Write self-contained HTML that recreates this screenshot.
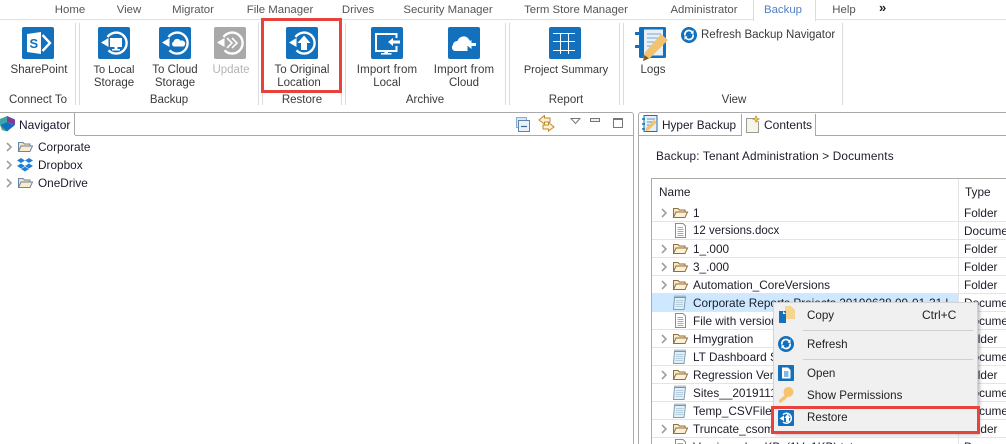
<!DOCTYPE html>
<html><head><meta charset="utf-8"><style>
html,body{margin:0;padding:0;background:#fff}
#p{position:relative;width:1006px;height:444px;overflow:hidden;background:#fff;font-family:"Liberation Sans",sans-serif;font-size:11.8px;color:#1c1c2a}
#p div,#p svg{position:absolute}
.t{white-space:nowrap;line-height:14px;height:14px}
.c{transform:translateX(-50%);color:#3a3a3a;text-align:center;font-size:11.5px}
.tab{top:3px;color:#555;transform:translateX(-50%);white-space:nowrap;line-height:14px;font-size:11.4px}
.v{width:1px;top:23px;height:82px;background:#dcdcdc}
.r{left:652px;width:306px;height:1px;background:#e4e4e4}
.r2{left:959px;width:47px;height:1px;background:#e4e4e4}
.sep{left:803px;width:169px;height:1px;background:#d0d0d0}
.m{font-size:11.6px;color:#222}
</style></head><body><div id="p">
<svg width="0" height="0"><defs>
<g id="arc"><path d="M9.500 10A10.500 10.500 0 1 1 10.500 23.300" fill="none" stroke="#fff" stroke-width="2.400"/><path d="M3 15.500L10.500 11V20Z" fill="#fff"/></g>
<g id="fold"><path d="M1.500 12.500V3.500H6L7.500 5H13V7" fill="#f9e8c2" stroke="#8f7040"/><path d="M1.500 12.500L4 7H15.500L13 12.500Z" fill="#fcf0d6" stroke="#8f7040"/></g>
<g id="doc"><path d="M2.500 .5H10L12.500 3V14.500H2.500Z" fill="#fff" stroke="#8c8c8c"/><path d="M4.500 4.500H10M4.500 6.500H10.500M4.500 8.500H10.500M4.500 10.500H10.500M4.500 12.500H10.500" stroke="#a8a8a8"/></g>
<g id="note"><path d="M2.500 2.500H13.500L12 14.500H1.500Z" fill="#e4eff7" stroke="#7c9fb8"/><path d="M3 .5V3M5 .5V3M7 .5V3M9 .5V3M11 .5V3M13 .5V3" stroke="#6f8ea5"/><path d="M4 5.500H11.500M3.800 7.500H11.300M3.600 9.500H11M3.400 11.500H10.800" stroke="#b4cede"/></g>
<path id="chev" d="M1 1L5 5L1 9" fill="none" stroke="#a0a0a0" stroke-width="1.600"/>
</defs></svg>

<!-- Tabs -->
<div class="tab" style="left:70px">Home</div>
<div class="tab" style="left:129px">View</div>
<div class="tab" style="left:193px">Migrator</div>
<div class="tab" style="left:280px">File Manager</div>
<div class="tab" style="left:358px">Drives</div>
<div class="tab" style="left:448px">Security Manager</div>
<div class="tab" style="left:576px">Term Store Manager</div>
<div class="tab" style="left:704px">Administrator</div>
<div style="left:0;top:19px;width:1006px;height:1px;background:#e0e0e0"></div>
<div style="left:753px;top:-3px;width:61px;height:23px;background:#fff;border:1px solid #dcdcdc;border-bottom:none;border-radius:3px 3px 0 0"></div>
<div class="tab" style="left:783px;color:#4f7fc4">Backup</div>
<div class="tab" style="left:844px">Help</div>
<div class="t" style="left:879px;top:1px;font-size:13px;color:#222;font-weight:bold">»</div>

<!-- Separators -->
<div class="v" style="left:75px"></div><div class="v" style="left:79px"></div>
<div class="v" style="left:258px"></div><div class="v" style="left:262px"></div>
<div class="v" style="left:341px"></div><div class="v" style="left:345px"></div>
<div class="v" style="left:505px"></div><div class="v" style="left:509px"></div>
<div class="v" style="left:619px"></div><div class="v" style="left:623px"></div>
<div class="v" style="left:842px"></div>

<!-- SharePoint -->
<svg style="left:22px;top:27px" width="32" height="32" viewBox="0 0 32 32"><rect width="32" height="32" rx="2" fill="#1270bd"/><path d="M5 7L19 5V27L5 25Z" fill="#fff"/><path d="M20.500 8L28 16L20.500 24" fill="none" stroke="#fff" stroke-width="2.400"/><text x="7.500" y="21" font-family="Liberation Sans" font-size="13" font-weight="bold" fill="#1270bd">S</text></svg>
<!-- To Local -->
<svg style="left:98px;top:27px" width="32" height="32" viewBox="0 0 32 32"><rect width="32" height="32" rx="2" fill="#1270bd"/><use href="#arc"/><rect x="12" y="11" width="12" height="9" fill="#fff"/><rect x="16.500" y="20" width="3" height="2" fill="#fff"/><rect x="14" y="22" width="8" height="1.500" fill="#fff"/></svg>
<!-- To Cloud -->
<svg style="left:159px;top:27px" width="32" height="32" viewBox="0 0 32 32"><rect width="32" height="32" rx="2" fill="#1270bd"/><use href="#arc"/><path d="M15 19.500A2.500 2.500 0 0 1 14.500 14.800A3.800 3.800 0 0 1 21.500 13.800A2.900 2.900 0 0 1 24.500 19.500Z" fill="#fff"/></svg>
<!-- Update -->
<svg style="left:214px;top:27px" width="32" height="32" viewBox="0 0 32 32"><rect width="32" height="32" rx="2" fill="#a9a9a9"/><use href="#arc"/><path d="M13 11L18 16L13 21M18 11L23 16L18 21" fill="none" stroke="#fff" stroke-width="1.600"/></svg>
<!-- To Original -->
<svg style="left:286px;top:27px" width="32" height="32" viewBox="0 0 32 32"><rect width="32" height="32" rx="2" fill="#1270bd"/><use href="#arc"/><path d="M18 8.500L24.500 16H21V23H15V16H11.500Z" fill="#fff"/></svg>
<!-- Import Local -->
<svg style="left:371px;top:27px" width="32" height="32" viewBox="0 0 32 32"><rect width="32" height="32" rx="2" fill="#1270bd"/><path d="M25.500 11V7H5V24H25.500V19" fill="none" stroke="#fff" stroke-width="2"/><rect x="13.500" y="24" width="3.500" height="2" fill="#fff"/><rect x="10" y="26" width="10.500" height="1.600" fill="#fff"/><path d="M17 15L22 11V13.500H29V16.500H22V19Z" fill="#fff"/></svg>
<!-- Import Cloud -->
<svg style="left:448px;top:27px" width="32" height="32" viewBox="0 0 32 32"><rect width="32" height="32" rx="2" fill="#1270bd"/><path d="M7 24A3.500 3.500 0 0 1 5 18C5 15 8 14 9.500 14C11 9 18 7.500 21 12.500C22 13.500 23 15 22 16L21 24Z" fill="#fff"/><path d="M19.500 24H25V17H19.500Z" fill="#1270bd"/><path d="M18 17.500L23.500 13V16H28V19H23.500V22Z" fill="#fff"/></svg>
<!-- Project Summary -->
<svg style="left:549px;top:27px" width="32" height="32" viewBox="0 0 32 32"><rect width="32" height="32" rx="2" fill="#1270bd"/><path d="M4 6.500H26M4 14.500H26M4 23.500H26M11.500 6V27M19.500 6V27" stroke="#fff" stroke-width="1" fill="none"/></svg>
<!-- Logs -->
<svg style="left:635px;top:26px" width="34" height="36" viewBox="0 0 34 36"><rect x="4" y="1" width="27" height="31" rx="1.500" fill="#1270bd"/><rect x="9" y="3.500" width="19" height="26" fill="#e6f0f8"/><path d="M12 8H26M12 12H26M12 16H26M12 20H24" stroke="#7aa6cc"/><path d="M1 7.500H7M1 20.500H7" stroke="#1270bd" stroke-width="3" stroke-linecap="round"/><path d="M9.500 27L26 8L33 14L15 32L8 35Z" fill="#f3c26f"/><path d="M8 35L9.500 29L14 32.500Z" fill="#7a5a28"/></svg>
<!-- Refresh -->
<svg style="left:681px;top:27px" width="16" height="16" viewBox="0 0 16 16"><circle cx="8" cy="8" r="8" fill="#1270bd"/><path d="M4 8.500A4 4 0 0 1 11 5M12 7.500A4 4 0 0 1 5 11" fill="none" stroke="#fff" stroke-width="1.800"/><path d="M9.500 6.500L12.500 3V7Z M6.500 9.500L3.500 13V9Z" fill="#fff"/></svg>

<div class="t c" style="left:39px;top:63px">SharePoint</div>
<div class="t c" style="left:114px;top:63px;font-size:11px">To Local</div><div class="t c" style="left:114px;top:76px">Storage</div>
<div class="t c" style="left:175px;top:63px">To Cloud</div><div class="t c" style="left:175px;top:76px">Storage</div>
<div class="t c" style="left:231px;top:63px;color:#b4b4b4">Update</div>
<div class="t c" style="left:302px;top:63px">To Original</div><div class="t c" style="left:299px;top:76px">Location</div>
<div class="t c" style="left:387px;top:63px;letter-spacing:.15px">Import from</div><div class="t c" style="left:387px;top:76px">Local</div>
<div class="t c" style="left:464px;top:63px;letter-spacing:.15px">Import from</div><div class="t c" style="left:464px;top:76px">Cloud</div>
<div class="t c" style="left:566px;top:63px;font-size:11px">Project Summary</div>
<div class="t c" style="left:653px;top:63px">Logs</div>
<div class="t" style="left:701px;top:28px;color:#3a3a3a;font-size:11.5px">Refresh Backup Navigator</div>
<div class="t c" style="left:38px;top:93px">Connect To</div>
<div class="t c" style="left:169px;top:93px">Backup</div>
<div class="t c" style="left:302px;top:93px">Restore</div>
<div class="t c" style="left:425px;top:93px">Archive</div>
<div class="t c" style="left:566px;top:93px">Report</div>
<div class="t c" style="left:734px;top:93px">View</div>

<!-- Red box top -->
<div style="left:261px;top:18px;width:75px;height:69px;border:3px solid #e8423c;z-index:3"></div>

<!-- Panels -->
<div style="left:0;top:112px;width:631px;height:1px;background:#aaa"></div>
<div style="left:631px;top:112px;height:332px;border-top:1px solid #aaa;border-right:1px solid #aaa;border-radius:0 3px 0 0;box-sizing:border-box;width:3px"></div>
<div style="left:638px;top:112px;width:368px;height:332px;border-top:1px solid #aaa;border-left:1px solid #aaa;border-radius:3px 0 0 0;box-sizing:border-box"></div>
<div style="left:74px;top:113px;width:1px;height:22px;background:#aaa"></div>
<div style="left:75px;top:135px;width:558px;height:1px;background:#aaa"></div>
<div style="left:639px;top:135px;width:367px;height:1px;background:#aaa"></div>
<div style="left:741px;top:114px;width:73px;height:22px;background:#fff;border-right:1px solid #aaa;border-left:1px solid #aaa"></div>

<!-- Navigator -->
<svg style="left:0;top:116px" width="16" height="16" viewBox="0 0 16 16"><path d="M7 0L15 3.500V9L7 6Z" fill="#7b3f98"/><path d="M7 0L0 3V9L7 6Z" fill="#3ba7a0"/><path d="M0 9L7 6L15 9L7 15.500Z" fill="#1270bd"/><path d="M0 9L7 15.500L2 14Z" fill="#3bab5e"/></svg>
<div class="t" style="left:19px;top:118px;color:#15152a;font-size:12px">Navigator</div>
<svg style="left:6px;top:142px" width="7" height="11" viewBox="0 0 7 11"><use href="#chev"/></svg>
<svg style="left:6px;top:160px" width="7" height="11" viewBox="0 0 7 11"><use href="#chev"/></svg>
<svg style="left:6px;top:178px" width="7" height="11" viewBox="0 0 7 11"><use href="#chev"/></svg>
<svg style="left:17px;top:139px" width="17" height="15" viewBox="0 0 17 15"><path d="M1.500 12.500V3.500H6L7.500 5H13V7" fill="#f8e3b4" stroke="#6a86a6"/><path d="M1.500 12.500L4 7H15.500L13 12.500Z" fill="#fbeccb" stroke="#6a86a6"/></svg>
<svg style="left:17px;top:157px" width="16" height="15" viewBox="0 0 16 15"><path d="M4 1L8 3.500L4 6L0 3.500ZM12 1L16 3.500L12 6L8 3.500ZM4 6.500L8 9L4 11.500L0 9ZM12 6.500L16 9L12 11.500L8 9ZM4 12L8 9.800L12 12L8 14.500Z" fill="#1f7fd8"/></svg>
<svg style="left:17px;top:175px" width="17" height="15" viewBox="0 0 17 15"><path d="M1.500 12.500V3.500H6L7.500 5H13V7" fill="#f8e3b4" stroke="#6a86a6"/><path d="M1.500 12.500L4 7H15.500L13 12.500Z" fill="#fbeccb" stroke="#6a86a6"/></svg>
<div class="t" style="left:38px;top:140px">Corporate</div>
<div class="t" style="left:38px;top:158px">Dropbox</div>
<div class="t" style="left:38px;top:176px">OneDrive</div>

<!-- Toolbar -->
<svg style="left:516px;top:117px" width="14" height="15" viewBox="0 0 14 15"><rect x=".5" y=".5" width="10" height="10" fill="#dbe7f2" stroke="#8eaecb"/><rect x="2.500" y="3.500" width="11" height="11" fill="#eaf1f8" stroke="#5a87ad"/><path d="M5 9.500H11" stroke="#3a6a94" stroke-width="1.200"/></svg>
<svg style="left:538px;top:115px" width="17" height="17" viewBox="0 0 17 17"><path d="M6.500 .5L1 5L6.500 9V7H12V3H6.500Z M10.500 7.500L16 12L10.500 16V14H5V10H10.500Z" fill="#fbf3d8" stroke="#c08a2c"/></svg>
<svg style="left:570px;top:118px" width="11" height="7" viewBox="0 0 11 7"><path d="M1 .5H10L5.500 5.500Z" fill="#fff" stroke="#777"/></svg>
<div style="left:590px;top:118px;width:8px;height:2px;border:1px solid #777;background:#eee"></div>
<div style="left:613px;top:118px;width:8px;border:1px solid #777;border-top-width:2px;height:7px"></div>

<!-- Right tabs -->
<svg style="left:642px;top:115px" width="16" height="18" viewBox="0 0 16 18"><rect x="2" y=".5" width="13" height="16" fill="#e6f0f8" stroke="#1270bd"/><path d="M5 4H13M5 7H13M5 10H11" stroke="#5f95c4"/><path d="M0 4H3M0 9H3M0 14H3" stroke="#1270bd" stroke-width="1.500"/><path d="M4 13L12 5L15 7L7 15L3.500 16.500Z" fill="#f3c26f"/></svg>
<div class="t" style="left:662px;top:118px">Hyper Backup</div>
<svg style="left:746px;top:115px" width="15" height="18" viewBox="0 0 15 18"><path d="M.5 3.500H8L12.500 7V17.500H.5Z" fill="#f8f5e8" stroke="#9a9a9a"/><path d="M10 .5L11 3L13.500 4L11 5L10 7.500L9 5L6.500 4L9 3Z" fill="#f3c64c" stroke="#a67c1a" stroke-width=".5"/></svg>
<div class="t" style="left:764px;top:118px;font-size:12px">Contents</div>

<div class="t" style="left:656px;top:149px;letter-spacing:.15px">Backup: Tenant Administration &gt; Documents</div>

<!-- Table -->
<div style="left:651px;top:178px;width:355px;height:1px;background:#aaa"></div>
<div style="left:651px;top:178px;width:1px;height:266px;background:#aaa"></div>
<div style="left:958px;top:179px;width:1px;height:265px;background:#e4e4e4"></div>
<div style="left:652px;top:293px;width:306px;height:18px;background:#cde8ff"></div>
<div class="r" style="top:221px"></div><div class="r2" style="top:221px"></div>
<div class="r" style="top:239px"></div><div class="r2" style="top:239px"></div>
<div class="r" style="top:257px"></div><div class="r2" style="top:257px"></div>
<div class="r" style="top:275px"></div><div class="r2" style="top:275px"></div>
<div class="r" style="top:293px"></div><div class="r2" style="top:293px"></div>
<div class="r" style="top:311px"></div><div class="r2" style="top:311px"></div>
<div class="r" style="top:329px"></div><div class="r2" style="top:329px"></div>
<div class="r" style="top:347px"></div><div class="r2" style="top:347px"></div>
<div class="r" style="top:365px"></div><div class="r2" style="top:365px"></div>
<div class="r" style="top:383px"></div><div class="r2" style="top:383px"></div>
<div class="r" style="top:401px"></div><div class="r2" style="top:401px"></div>
<div class="r" style="top:419px"></div><div class="r2" style="top:419px"></div>
<div class="r" style="top:437px"></div><div class="r2" style="top:437px"></div>

<div class="t" style="left:659px;top:185px">Name</div>
<div class="t" style="left:965px;top:185px">Type</div>

<svg style="left:661px;top:208px" width="7" height="11" viewBox="0 0 7 11"><use href="#chev"/></svg><svg style="left:672px;top:205px" width="17" height="15" viewBox="0 0 17 15"><use href="#fold"/></svg><div class="t" style="left:693px;top:206px">1</div><div class="t" style="left:964px;top:206px">Folder</div>
<svg style="left:673px;top:223px" width="14" height="15" viewBox="0 0 14 15"><use href="#doc"/></svg><div class="t" style="left:693px;top:224px;font-size:11.500px">12 versions.docx</div><div class="t" style="left:964px;top:224px">Document</div>
<svg style="left:661px;top:244px" width="7" height="11" viewBox="0 0 7 11"><use href="#chev"/></svg><svg style="left:672px;top:241px" width="17" height="15" viewBox="0 0 17 15"><use href="#fold"/></svg><div class="t" style="left:693px;top:242px">1_.000</div><div class="t" style="left:964px;top:242px">Folder</div>
<svg style="left:661px;top:262px" width="7" height="11" viewBox="0 0 7 11"><use href="#chev"/></svg><svg style="left:672px;top:259px" width="17" height="15" viewBox="0 0 17 15"><use href="#fold"/></svg><div class="t" style="left:693px;top:260px">3_.000</div><div class="t" style="left:964px;top:260px">Folder</div>
<svg style="left:661px;top:280px" width="7" height="11" viewBox="0 0 7 11"><use href="#chev"/></svg><svg style="left:672px;top:277px" width="17" height="15" viewBox="0 0 17 15"><use href="#fold"/></svg><div class="t" style="left:693px;top:278px">Automation_CoreVersions</div><div class="t" style="left:964px;top:278px">Folder</div>
<svg style="left:672px;top:295px" width="15" height="15" viewBox="0 0 15 15"><use href="#note"/></svg><div class="t" style="left:693px;top:296px">Corporate Reports Projects 20190628 09-01-31.l</div><div class="t" style="left:964px;top:296px">Document</div>
<svg style="left:673px;top:313px" width="14" height="15" viewBox="0 0 14 15"><use href="#doc"/></svg><div class="t" style="left:693px;top:314px">File with version</div><div class="t" style="left:964px;top:314px">Document</div>
<svg style="left:661px;top:334px" width="7" height="11" viewBox="0 0 7 11"><use href="#chev"/></svg><svg style="left:672px;top:331px" width="17" height="15" viewBox="0 0 17 15"><use href="#fold"/></svg><div class="t" style="left:693px;top:332px">Hmygration</div><div class="t" style="left:964px;top:332px">Folder</div>
<svg style="left:672px;top:349px" width="15" height="15" viewBox="0 0 15 15"><use href="#note"/></svg><div class="t" style="left:693px;top:350px">LT Dashboard Sites</div><div class="t" style="left:964px;top:350px">Document</div>
<svg style="left:661px;top:370px" width="7" height="11" viewBox="0 0 7 11"><use href="#chev"/></svg><svg style="left:672px;top:367px" width="17" height="15" viewBox="0 0 17 15"><use href="#fold"/></svg><div class="t" style="left:693px;top:368px">Regression Versions</div><div class="t" style="left:964px;top:368px">Folder</div>
<svg style="left:672px;top:385px" width="15" height="15" viewBox="0 0 15 15"><use href="#note"/></svg><div class="t" style="left:693px;top:386px">Sites__20191115</div><div class="t" style="left:964px;top:386px">Document</div>
<svg style="left:672px;top:403px" width="15" height="15" viewBox="0 0 15 15"><use href="#note"/></svg><div class="t" style="left:693px;top:404px">Temp_CSVFile_report</div><div class="t" style="left:964px;top:404px">Document</div>
<svg style="left:661px;top:424px" width="7" height="11" viewBox="0 0 7 11"><use href="#chev"/></svg><svg style="left:672px;top:421px" width="17" height="15" viewBox="0 0 17 15"><use href="#fold"/></svg><div class="t" style="left:693px;top:422px">Truncate_csom</div><div class="t" style="left:964px;top:422px">Folder</div>
<svg style="left:673px;top:439px" width="14" height="15" viewBox="0 0 14 15"><use href="#doc"/></svg><div class="t" style="left:693px;top:440px">Version_sha_KBs(1V_1KB).txt</div><div class="t" style="left:964px;top:440px">Document</div>

<!-- Context menu -->
<div style="left:773px;top:302px;width:205px;height:131px;background:#f0f0f0;border:1px solid #d4d4d4;box-sizing:border-box;box-shadow:2px 2px 3px rgba(0,0,0,.25);z-index:4">
<div class="sep" style="left:29px;top:27px;width:170px"></div>
<div class="sep" style="left:29px;top:56px;width:170px"></div>
<div class="t m" style="left:33px;top:6px">Copy</div>
<div class="t m" style="left:148px;top:5px;font-size:12px">Ctrl+C</div>
<div class="t m" style="left:33px;top:35px">Refresh</div>
<div class="t m" style="left:33px;top:64px">Open</div>
<div class="t m" style="left:33px;top:86px">Show Permissions</div>
<div class="t m" style="left:33px;top:108px">Restore</div>
</div>
<svg style="left:778px;top:306px;z-index:5" width="18" height="18" viewBox="0 0 18 18"><path d="M7 0H13L17 4V13H7Z" fill="#f5d590"/><path d="M1 5H8V17H1Z" fill="#1270bd"/><path d="M5 5L8 8H5Z" fill="#fff"/></svg>
<svg style="left:778px;top:336px;z-index:5" width="16" height="16" viewBox="0 0 16 16"><circle cx="8" cy="8" r="8" fill="#1270bd"/><path d="M4 8.500A4 4 0 0 1 11 5M12 7.500A4 4 0 0 1 5 11" fill="none" stroke="#fff" stroke-width="1.800"/><path d="M9.500 6.500L12.500 3V7Z M6.500 9.500L3.500 13V9Z" fill="#fff"/></svg>
<svg style="left:778px;top:365px;z-index:5" width="16" height="16" viewBox="0 0 16 16"><rect width="16" height="16" rx="1" fill="#1270bd"/><path d="M4 2.500H10L12.500 5V13.500H4Z" fill="#fff"/><path d="M6 7H10.500M6 9H10.500M6 11H10.500" stroke="#1270bd"/></svg>
<svg style="left:778px;top:387px;z-index:5" width="16" height="16" viewBox="0 0 16 16"><circle cx="10.500" cy="5" r="5" fill="#f5c46a"/><path d="M8 7L1 13V15.500H4L5 13.500H6.500L10 9Z" fill="#f5c46a"/></svg>
<svg style="left:778px;top:410px;z-index:5" width="16" height="16" viewBox="0 0 16 16"><rect width="16" height="16" rx="1" fill="#1270bd"/><path d="M5 4.500A5 5 0 1 1 5 12" fill="none" stroke="#fff" stroke-width="1.500"/><path d="M1.500 8.500L6 5.500V11Z" fill="#fff"/><path d="M9.500 4L12.500 8H11V12H8V8H6.500Z" fill="#fff"/></svg>
<div style="left:771px;top:406px;width:203px;height:22px;border:3px solid #e8423c;z-index:6"></div>
</div></body></html>
